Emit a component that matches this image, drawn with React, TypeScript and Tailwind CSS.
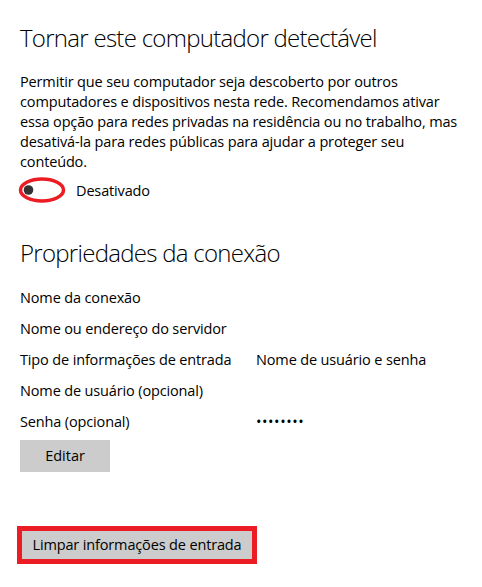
import React from 'react';

const rows: { label: string; value?: string }[] = [
  { label: 'Nome da conexão' },
  { label: 'Nome ou endereço do servidor' },
  { label: 'Tipo de informações de entrada', value: 'Nome de usuário e senha' },
  { label: 'Nome de usuário (opcional)' },
  { label: 'Senha (opcional)', value: '••••••••' },
];

function Toggle() {
  return (
    <svg width="50" height="28" viewBox="0 0 50 28" className="shrink-0">
      <ellipse cx="24" cy="13" rx="21.5" ry="11" fill="none" stroke="#ec1c24" strokeWidth="3.5" />
      <circle cx="10.5" cy="13" r="4.8" fill="#333333" />
    </svg>
  );
}

export default function App() {
  return (
    <div className="min-h-screen bg-white text-black font-['Open_Sans',sans-serif] px-5 pt-[22px]">
      <h2 className="text-[24px] leading-8 font-light tracking-[-0.03em]">Tornar este computador detectável</h2>
      <p className="mt-[18px] text-[14.5px] leading-5 tracking-[-0.01em] w-[445px]">
        Permitir que seu computador seja descoberto por outros computadores e dispositivos nesta rede.
        Recomendamos ativar essa opção para redes privadas na residência ou no trabalho, mas desativá-la
        para redes públicas para ajudar a proteger seu conteúdo.
      </p>
      <div className="flex items-center gap-[8px] mt-[5px] -ml-[2px]">
        <Toggle />
        <span className="text-[14.5px] tracking-[-0.01em]">Desativado</span>
      </div>

      <h2 className="mt-[32px] text-[24px] leading-8 font-light tracking-[-0.03em]">Propriedades da conexão</h2>
      <div className="mt-[13px] flex flex-col">
        {rows.map((r) => (
          <div key={r.label} className="flex h-[31px] items-center text-[14.5px] tracking-[-0.01em]">
            <span className="w-[236px]">{r.label}</span>
            {r.value && (
              <span className={r.value.startsWith('•') ? 'tracking-[0.04em]' : ''}>{r.value}</span>
            )}
          </div>
        ))}
      </div>
      <button className="mt-[3px] w-[90px] h-8 bg-[#cccccc] text-[14.5px]">Editar</button>

      <div className="mt-[54px] -ml-[3px] w-fit border-[5px] border-[#ec1c24]">
        <button className="h-[28px] w-[230px] bg-[#cccccc] text-[14.5px] tracking-[-0.01em]">
          Limpar informações de entrada
        </button>
      </div>
    </div>
  );
}
